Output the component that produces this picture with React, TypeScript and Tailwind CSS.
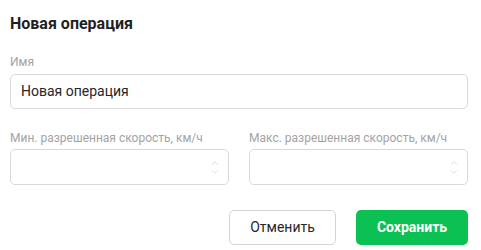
import { ChevronDown, ChevronUp } from "lucide-react";

function NumberField({ label }: { label: string }) {
  return (
    <div className="flex flex-col">
      <label className="text-[12px] leading-[16px] text-[#a3a3a3]">{label}</label>
      <div className="mt-[3px] h-[36px] rounded-[5px] border border-[#d9d9d9] bg-white flex items-center justify-end pr-[8px]">
        <div className="flex flex-col items-center text-[#c4c4c4]">
          <ChevronUp size={10} strokeWidth={1.5} />
          <ChevronDown size={10} strokeWidth={1.5} className="-mt-[1px]" />
        </div>
      </div>
    </div>
  );
}

export default function App() {
  return (
    <div
      className="w-[481px] h-[250px] bg-white pl-[10px] pt-[13px]"
      style={{ fontFamily: "Roboto, 'Liberation Sans', sans-serif" }}
    >
      <div className="w-[458px]">
        <h1 className="text-[16px] leading-[22px] font-bold text-[#1f1f1f]">Новая операция</h1>

        <div className="mt-[19px] flex flex-col">
          <label className="text-[12px] leading-[16px] text-[#a3a3a3]">Имя</label>
          <div className="mt-[4px] h-[35px] rounded-[5px] border border-[#d9d9d9] bg-white flex items-center px-[10px]">
            <span className="text-[14px] text-[#262626]">Новая операция</span>
          </div>
        </div>

        <div className="mt-[21px] grid grid-cols-2 gap-x-[20px]">
          <NumberField label="Мин. разрешенная скорость, км/ч" />
          <NumberField label="Макс. разрешенная скорость, км/ч" />
        </div>

        <div className="mt-[25px] flex justify-end gap-[20px]">
          <button className="h-[35px] w-[107px] rounded-[5px] border border-[#d4d4d4] bg-white text-[14px] text-[#262626]">
            Отменить
          </button>
          <button className="h-[35px] w-[112px] rounded-[5px] bg-[#0cc153] text-[14px] font-bold text-white">
            Сохранить
          </button>
        </div>
      </div>
    </div>
  );
}
